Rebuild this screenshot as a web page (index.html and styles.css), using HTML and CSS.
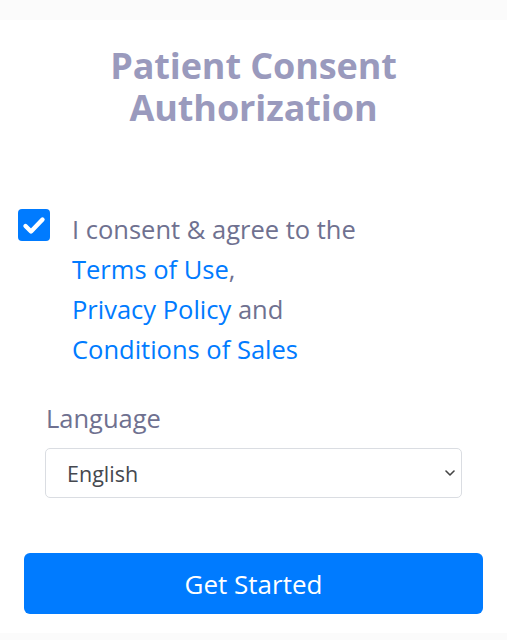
FILE: index.html
```html
<!DOCTYPE html>
<html lang="en">
<head>
<meta charset="utf-8">
<link rel="stylesheet" href="styles.css">
</head>
<body>
<div class="topbar"></div>
<main class="page">
  <h1 class="title"><span class="title-line">Patient Consent</span><span class="title-line">Authorization</span></h1>
  <div class="consent">
    <span class="checkbox">
      <svg viewBox="0 0 32 32" width="32" height="32"><path d="M7.5 17 L13 22.5 L24.5 10.5" fill="none" stroke="#fff" stroke-width="4.4" stroke-linecap="round" stroke-linejoin="round"/></svg>
    </span>
    <p class="consent-text">I consent &amp; agree to the<br><a href="#">Terms of Use</a>,<br><a href="#">Privacy Policy</a> and<br><a href="#">Conditions of Sales</a></p>
  </div>
  <div class="field">
    <label class="label" for="lang">Language</label>
    <div class="select-wrap">
      <select id="lang" class="select"><option>English</option></select>
      <svg class="chev" viewBox="0 0 10 6" width="10" height="6"><path d="M1 1 L5 5 L9 1" fill="none" stroke="#444" stroke-width="1.6" stroke-linecap="round" stroke-linejoin="round"/></svg>
    </div>
  </div>
  <button class="btn">Get Started</button>
</main>
<div class="bottombar"></div>
</body>
</html>
```
FILE: styles.css
```css
html, body { margin: 0; padding: 0; background: #fff; }
body { font-family: "Open Sans", "Noto Sans", sans-serif; width: 507px; height: 640px; display: flex; flex-direction: column; }
.topbar { height: 20px; background: #fbfbfb; }
.page { flex: 1; display: flex; flex-direction: column; }
.title { margin: 25px 0 0; text-align: center; font-size: 36px; line-height: 42px; font-weight: 700; color: #9a9abd; letter-spacing: -0.1px; display: flex; flex-direction: column; }
.title-line { display: block; height: 42px; }
.consent { display: flex; align-items: flex-start; margin: 80px 0 0 18px; }
.checkbox { width: 32px; height: 32px; border-radius: 4px; background: #007bff; flex: none; display: flex; }
.consent-text { margin: 0 0 0 22px; font-size: 25.5px; line-height: 40px; color: #6f7190; }
.consent-text a { color: #007bff; text-decoration: none; }
.field { margin: 32px 0 0 45px; width: 417px; display: flex; flex-direction: column; }
.label { font-size: 25.5px; line-height: 34px; color: #6f7190; padding-left: 1px; }
.select-wrap { position: relative; margin-top: 13px; }
.select { appearance: none; -webkit-appearance: none; width: 100%; height: 50px; border: 1px solid #dadde2; border-radius: 5px; background: #fff; font-family: inherit; font-size: 21.5px; color: #45484f; padding: 0 0 0 21px; }
.chev { position: absolute; right: 7px; top: 22px; }
.btn { margin: 55px 0 0 24px; width: 459px; height: 61px; border: none; border-radius: 6px; background: #007bff; color: #fff; font-family: inherit; font-size: 26px; }
.bottombar { height: 7px; background: #fbfbfb; }
```
